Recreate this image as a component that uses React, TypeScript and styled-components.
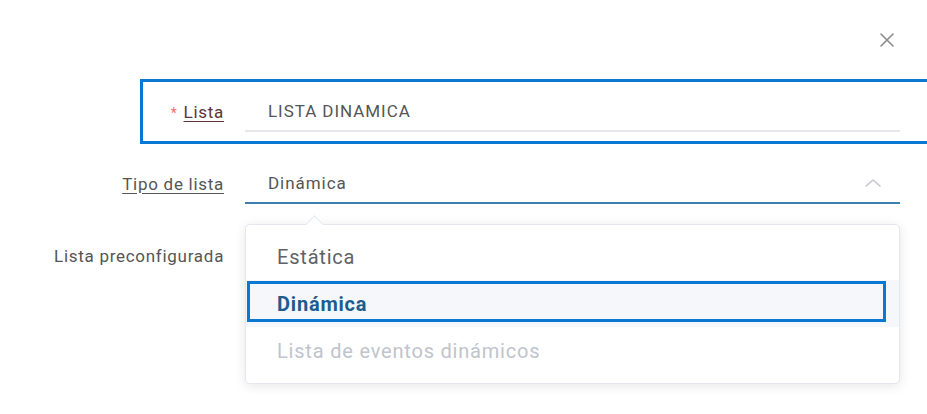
import React from "react";
import styled, { createGlobalStyle } from "styled-components";

const Global = createGlobalStyle`
  html, body { margin: 0; padding: 0; background: #fff; }
  body { font-family: Roboto, "Noto Sans", "Liberation Sans", sans-serif; }
`;

const Page = styled.div`
  position: relative;
  width: 927px;
  height: 414px;
  overflow: hidden;
  background: #fff;
  box-sizing: border-box;
  padding: 91px 0 0 54px;
`;

const CloseButton = styled.button`
  position: absolute;
  top: 31px;
  right: 31px;
  width: 18px;
  height: 18px;
  padding: 0;
  border: none;
  background: transparent;
  color: #8a8a8a;
  display: flex;
  align-items: center;
  justify-content: center;
`;

const Form = styled.div`
  display: flex;
  flex-direction: column;
  gap: 31px;
`;

const Row = styled.div<{ $focused?: boolean }>`
  position: relative;
  display: grid;
  grid-template-columns: 171px 655px;
  column-gap: 20px;
  align-items: center;
  height: 41px;
  &::after {
    content: "";
    display: ${(p) => (p.$focused ? "block" : "none")};
    position: absolute;
    left: 86px;
    right: -13px;
    top: -12px;
    bottom: -12px;
    border: 3px solid #0a78d2;
    pointer-events: none;
  }
`;

const Label = styled.label<{ $linked?: boolean; $required?: boolean }>`
  text-align: right;
  font-size: 17px;
  letter-spacing: 0.72px;
  color: ${(p) => (p.$required ? "#5e3434" : "#555")};
  white-space: nowrap;
  padding-right: 1px;
`;

const LinkText = styled.span`
  text-decoration: underline;
  text-underline-offset: 3px;
`;

const Star = styled.span`
  color: #f56c6c;
  margin-right: 6px;
  font-size: 14px;
  display: inline-block;
`;

const Control = styled.div<{ $active?: boolean }>`
  position: relative;
  height: 41px;
  box-sizing: border-box;
  display: flex;
  align-items: center;
  justify-content: space-between;
  padding: 0 18px 0 23px;
  border-bottom: 2px solid ${(p) => (p.$active ? "#3d7eb0" : "#e6e6ec")};
  font-size: 17px;
  letter-spacing: 0.95px;
  color: #555;
`;

const Menu = styled.div`
  position: absolute;
  top: 61px;
  left: 0;
  width: 655px;
  box-sizing: border-box;
  background: #fff;
  border: 1px solid #e4e7ed;
  border-radius: 5px;
  box-shadow: 0 2px 12px rgba(0, 0, 0, 0.1);
  padding: 8px 0 9px;
  z-index: 5;
  letter-spacing: 0.8px;
  &::before {
    content: "";
    position: absolute;
    top: -7px;
    left: 62px;
    width: 12px;
    height: 12px;
    background: #fff;
    border-left: 1px solid #e4e7ed;
    border-top: 1px solid #e4e7ed;
    transform: rotate(45deg);
  }
`;

const Option = styled.div<{ $selected?: boolean; $disabled?: boolean }>`
  position: relative;
  height: 47px;
  display: flex;
  align-items: center;
  padding: 0 31px;
  font-size: 20px;
  color: ${(p) => (p.$disabled ? "#c0c4cc" : p.$selected ? "#1d5c8e" : "#606266")};
  font-weight: ${(p) => (p.$selected ? 700 : 400)};
  background: ${(p) => (p.$selected ? "#f5f7fa" : "transparent")};
  &::after {
    content: "";
    display: ${(p) => (p.$selected ? "block" : "none")};
    position: absolute;
    left: 1px;
    right: 13px;
    top: 1px;
    bottom: 5px;
    border: 3px solid #0a78d2;
  }
`;

export default function App() {
  return (
    <>
      <Global />
      <Page>
        <CloseButton aria-label="Cerrar">
          <svg width="16" height="16" viewBox="0 0 16 16" fill="none" stroke="currentColor" strokeWidth="1.6" strokeLinecap="round">
            <path d="M2 2 L14 14 M14 2 L2 14" />
          </svg>
        </CloseButton>
        <Form>
          <Row $focused>
            <Label $required>
              <Star>*</Star>
              <LinkText>Lista</LinkText>
            </Label>
            <Control>LISTA DINAMICA</Control>
          </Row>
          <Row>
            <Label>
              <LinkText>Tipo de lista</LinkText>
            </Label>
            <Control $active>
              <span>Dinámica</span>
              <svg width="18" height="10" viewBox="0 0 18 10" fill="none" stroke="#c3c6cc" strokeWidth="1.6" strokeLinecap="round" strokeLinejoin="round">
                <path d="M2 8 L9 2 L16 8" />
              </svg>
              <Menu>
                <Option>Estática</Option>
                <Option $selected>Dinámica</Option>
                <Option $disabled>Lista de eventos dinámicos</Option>
              </Menu>
            </Control>
          </Row>
          <Row>
            <Label>Lista preconfigurada</Label>
            <div />
          </Row>
        </Form>
      </Page>
    </>
  );
}
